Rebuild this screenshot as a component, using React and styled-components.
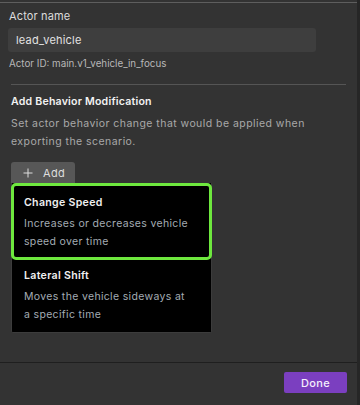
import styled, { createGlobalStyle } from "styled-components";

const GlobalStyle = createGlobalStyle`
  html, body {
    margin: 0;
    padding: 0;
    background: #333333;
  }
  * {
    box-sizing: border-box;
  }
`;

const Panel = styled.div`
  width: 360px;
  height: 405px;
  display: flex;
  flex-direction: column;
  background: #333333;
  border-right: 3px solid #262626;
  font-family: Inter, "Noto Sans", sans-serif;
  padding-top: 2px;
`;

const TopRule = styled.div`
  height: 1px;
  background: #5e5e5e;
`;

const Content = styled.div`
  flex: 1;
  padding: 5px 0 0;
`;

const Field = styled.div`
  padding: 0 8px;
  display: flex;
  flex-direction: column;
`;

const Label = styled.div`
  font-size: 11px;
  line-height: 16px;
  color: #dcdcdc;
  padding-left: 1px;
  letter-spacing: 0.15px;
`;

const TextInput = styled.div`
  margin-top: 4px;
  width: 308px;
  height: 24px;
  background: #3e3e3e;
  border-radius: 3px;
  padding-left: 8px;
  display: flex;
  align-items: center;
  font-size: 11px;
  color: #e2e2e2;
  letter-spacing: 0.2px;
`;

const Hint = styled.div`
  margin-top: 5px;
  font-size: 9.8px;
  line-height: 14px;
  color: #b8b8b8;
  padding-left: 1px;
`;

const Divider = styled.div`
  margin: 13px 11px 0;
  height: 1px;
  background: #555555;
`;

const Section = styled.div`
  padding: 9px 11px 0;
`;

const SectionTitle = styled.div`
  font-size: 10.6px;
  line-height: 16px;
  font-weight: 600;
  color: #f2f2f2;
  letter-spacing: 0.2px;
`;

const Description = styled.p`
  margin: 5px 0 0;
  font-size: 10.5px;
  line-height: 18px;
  color: #a9a9a9;
  letter-spacing: 0.45px;
  width: 320px;
`;

const AddButton = styled.div`
  margin-top: 11px;
  width: 64px;
  height: 21px;
  background: #575757;
  border-radius: 3px 3px 0 0;
  display: flex;
  align-items: center;
  gap: 10px;
  padding-left: 12px;
  font-size: 11px;
  color: #dddddd;
  letter-spacing: 0.4px;
`;

const Menu = styled.div`
  width: 201px;
  background: #000000;
  border: 1px solid #3c3c3c;
  border-top: none;
  border-radius: 0 0 2px 2px;
`;

const MenuItem = styled.div`
  border: ${(p) => (p.$active ? "3px solid #6ee83e" : "none")};
  border-radius: ${(p) => (p.$active ? "5px" : "0")};
  margin: ${(p) => (p.$active ? "0 -1px" : "0")};
  padding: ${(p) => (p.$active ? "9px 10px 6px" : "8px 12px 8px")};
`;

const ItemTitle = styled.div`
  font-size: 10.6px;
  line-height: 16px;
  font-weight: 600;
  color: #f0f0f0;
  letter-spacing: 0.3px;
`;

const ItemText = styled.div`
  margin-top: 4px;
  font-size: 10.5px;
  line-height: 18px;
  color: #a4acb4;
  letter-spacing: 0.33px;
`;

const Footer = styled.div`
  border-top: 1px solid #1f1f1f;
  height: 43px;
  display: flex;
  justify-content: flex-end;
  padding: 9px 10px 0 0;
`;

const DoneButton = styled.div`
  width: 63px;
  height: 21px;
  background: #7b3fc0;
  border-radius: 2px;
  display: flex;
  align-items: center;
  justify-content: center;
  font-size: 11px;
  font-weight: 500;
  color: #f4eefc;
  letter-spacing: 0.3px;
`;

const PlusIcon = () => (
  <svg width="10" height="10" viewBox="0 0 10 10">
    <path d="M5 0.5v9M0.5 5h9" stroke="#dddddd" strokeWidth="1" fill="none" />
  </svg>
);

const options = [
  {
    title: "Change Speed",
    text: ["Increases or decreases vehicle", "speed over time"],
    active: true,
  },
  {
    title: "Lateral Shift",
    text: ["Moves the vehicle sideways at", "a specific time"],
    active: false,
  },
];

export default function App() {
  return (
    <>
      <GlobalStyle />
      <Panel>
        <TopRule />
        <Content>
          <Field>
            <Label>Actor name</Label>
            <TextInput>lead_vehicle</TextInput>
            <Hint>Actor ID: main.v1_vehicle_in_focus</Hint>
          </Field>
          <Divider />
          <Section>
            <SectionTitle>Add Behavior Modification</SectionTitle>
            <Description>
              Set actor behavior change that would be applied when exporting
              the scenario.
            </Description>
            <AddButton>
              <PlusIcon />
              Add
            </AddButton>
            <Menu>
              {options.map((o) => (
                <MenuItem key={o.title} $active={o.active}>
                  <ItemTitle>{o.title}</ItemTitle>
                  <ItemText>
                    {o.text[0]}
                    <br />
                    {o.text[1]}
                  </ItemText>
                </MenuItem>
              ))}
            </Menu>
          </Section>
        </Content>
        <Footer>
          <DoneButton>Done</DoneButton>
        </Footer>
      </Panel>
    </>
  );
}
